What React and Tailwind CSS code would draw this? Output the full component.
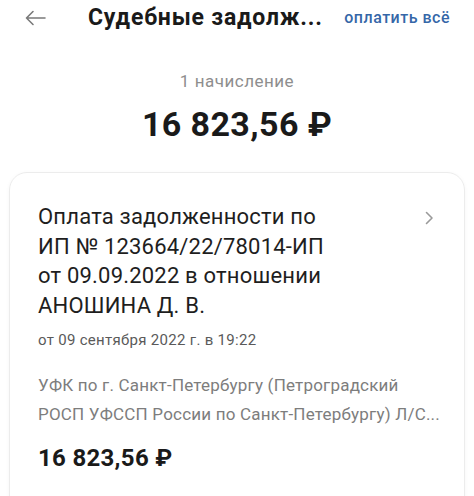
import React from "react";

export default function App() {
  return (
    <div className="w-[474px] h-[496px] overflow-hidden bg-white" style={{ fontFamily: "Roboto, 'Noto Sans', sans-serif" }}>
      <div className="h-[36px] flex items-center pl-[25px] pr-[24px]">
        <svg width="21" height="16" viewBox="0 0 21 16" fill="none" stroke="#7a7a7a" strokeWidth="1.6" strokeLinecap="round" strokeLinejoin="round">
          <path d="M20 8H1.5M8 1.5L1.5 8L8 14.5" />
        </svg>
        <div className="ml-[42px] text-[23px] font-bold text-[#1a1a1a] tracking-[0.8px]">Судебные задолж...</div>
        <div className="ml-auto text-[16px] font-medium text-[#3567a8] tracking-[0.5px]">оплатить всё</div>
      </div>
      <div className="mt-[35px] text-center text-[17px] text-[#8e8e8e] leading-[20px] tracking-[0.5px]">1 начисление</div>
      <div className="mt-[13px] text-center text-[34px] font-bold text-[#1a1a1a] leading-[40px] tracking-[0.4px]">16 823,56 ₽</div>
      <div className="mt-[28px] mx-[9px] rounded-t-[18px] border border-[#ececec] shadow-[0_1px_4px_rgba(0,0,0,0.04)] h-[400px] pl-[28px] pr-[30px] pt-[29px]">
        <div className="flex justify-between">
          <div className="text-[22px] leading-[29.5px] text-[#1e1e1e] tracking-[0.2px]">
            Оплата задолженности по<br />
            ИП № 123664/22/78014-ИП<br />
            от 09.09.2022 в отношении<br />
            АНОШИНА Д. В.
          </div>
          <svg className="mt-[9px]" width="9" height="14" viewBox="0 0 9 14" fill="none" stroke="#9a9a9a" strokeWidth="1.6" strokeLinecap="round" strokeLinejoin="round">
            <path d="M1.5 1.5L7 7L1.5 12.5" />
          </svg>
        </div>
        <div className="mt-[10px] text-[15px] leading-[20px] text-[#5a5a5a] tracking-[0.3px]">от 09 сентября 2022 г. в 19:22</div>
        <div className="mt-[21px] text-[17px] leading-[29px] text-[#7d7d7d] whitespace-nowrap tracking-[0.2px]">
          УФК по г. Санкт-Петербургу (Петроградский<br />
          РОСП УФССП России по Санкт-Петербургу) Л/С...
        </div>
        <div className="mt-[15px] text-[24px] font-bold leading-[28px] text-[#1a1a1a] tracking-[0.3px]">16 823,56 ₽</div>
      </div>
    </div>
  );
}
